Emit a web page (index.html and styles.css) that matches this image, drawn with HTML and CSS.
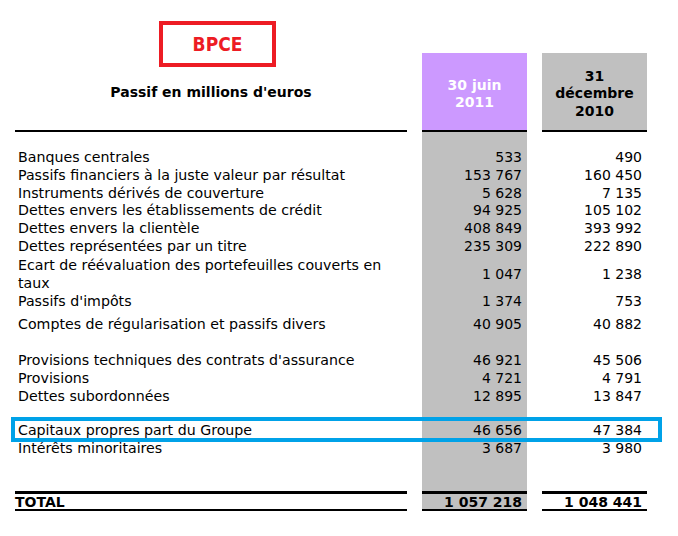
FILE: index.html
```html
<!DOCTYPE html>
<html lang="fr">
<head>
<meta charset="utf-8">
<title>BPCE – Passif</title>
<link rel="stylesheet" href="styles.css">
</head>
<body>
<table class="sheet">
  <colgroup>
    <col class="col-label">
    <col class="col-num">
    <col class="col-num">
  </colgroup>
  <thead>
    <tr class="head">
      <td class="head-label">
        <div class="head-box">
          <div class="brand">BPCE</div>
          <div class="title">Passif en millions d'euros</div>
        </div>
      </td>
      <td><div class="date date-cur">30 juin<br>2011</div></td>
      <td><div class="date date-prev">31<br>décembre<br>2010</div></td>
    </tr>
  </thead>
  <tbody>
    <tr class="first"><td class="lbl">Banques centrales</td><td class="v1">533</td><td class="v2">490</td></tr>
    <tr><td class="lbl">Passifs financiers à la juste valeur par résultat</td><td class="v1">153 767</td><td class="v2">160 450</td></tr>
    <tr><td class="lbl">Instruments dérivés de couverture</td><td class="v1">5 628</td><td class="v2">7 135</td></tr>
    <tr><td class="lbl">Dettes envers les établissements de crédit</td><td class="v1">94 925</td><td class="v2">105 102</td></tr>
    <tr><td class="lbl">Dettes envers la clientèle</td><td class="v1">408 849</td><td class="v2">393 992</td></tr>
    <tr><td class="lbl">Dettes représentées par un titre</td><td class="v1">235 309</td><td class="v2">222 890</td></tr>
    <tr class="two"><td class="lbl">Ecart de réévaluation des portefeuilles couverts en taux</td><td class="v1">1 047</td><td class="v2">1 238</td></tr>
    <tr class="pad-xs"><td class="lbl">Passifs d'impôts</td><td class="v1">1 374</td><td class="v2">753</td></tr>
    <tr class="pad-s"><td class="lbl">Comptes de régularisation et passifs divers</td><td class="v1">40 905</td><td class="v2">40 882</td></tr>
    <tr class="pad-l"><td class="lbl">Provisions techniques des contrats d'assurance</td><td class="v1">46 921</td><td class="v2">45 506</td></tr>
    <tr><td class="lbl">Provisions</td><td class="v1">4 721</td><td class="v2">4 791</td></tr>
    <tr><td class="lbl">Dettes subordonnées</td><td class="v1">12 895</td><td class="v2">13 847</td></tr>
    <tr class="pad-m"><td class="lbl hl-cell">Capitaux propres part du Groupe<span class="highlight"></span></td><td class="v1">46 656</td><td class="v2">47 384</td></tr>
    <tr class="last"><td class="lbl">Intérêts minoritaires</td><td class="v1">3 687</td><td class="v2">3 980</td></tr>
    <tr class="total"><td class="lbl">TOTAL</td><td class="v1">1 057 218</td><td class="v2">1 048 441</td></tr>
  </tbody>
</table>
</body>
</html>
```

FILE: styles.css
```css
html, body {
  margin: 0;
  background: #ffffff;
}

body {
  font-family: "DejaVu Sans", Verdana, sans-serif;
  font-size: 14px;
  color: #000000;
}

.sheet {
  border-collapse: separate;
  border-spacing: 15px 0;
  table-layout: fixed;
  width: 662px;
  margin-top: 21px;
}

.col-label { width: 392px; }
.col-num { width: 105px; }

.sheet td {
  padding: 0;
  line-height: 17.7px;
  vertical-align: top;
}

/* header */
.head td {
  vertical-align: bottom;
  border-bottom: 2px solid #000000;
}

.head td.head-label {
  vertical-align: top;
}

.head-box {
  height: 109px;
  display: flex;
  flex-direction: column;
}

.brand {
  margin-left: 144px;
  width: 117px;
  height: 46px;
  box-sizing: border-box;
  border: 4px solid #ed1c24;
  display: flex;
  align-items: center;
  justify-content: center;
  color: #ed1c24;
  font-family: "DejaVu Sans Condensed", "Liberation Sans Narrow", "DejaVu Sans", sans-serif;
  font-stretch: condensed;
  font-weight: bold;
  font-size: 19px;
  padding-top: 2px;
}

.title {
  margin-top: 17.3px;
  text-align: center;
  font-weight: bold;
  line-height: 17.7px;
}

.date {
  height: 77px;
  box-sizing: border-box;
  text-align: center;
  font-weight: bold;
  line-height: 17.3px;
}

.date-cur {
  background: #cc99ff;
  color: #ffffff;
  padding-top: 23.5px;
}

.date-prev {
  background: #c0c0c0;
  color: #000000;
  padding-top: 15.2px;
}

/* body rows */
.sheet td.lbl {
  padding-left: 3px;
  padding-right: 22px;
  font-size: 14.2px;
}

.sheet td.v1 {
  background: #c0c0c0;
  text-align: right;
  padding-right: 5px;
}

.sheet td.v2 {
  text-align: right;
  padding-right: 5px;
}

.sheet tr.first > td { padding-top: 17.3px; }
.sheet tr.pad-xs > td { padding-top: 0.6px; }
.sheet tr.pad-s > td { padding-top: 5.3px; }
.sheet tr.pad-l > td { padding-top: 18.3px; }
.sheet tr.pad-m > td { padding-top: 16.9px; }
.sheet tr.last > td { padding-bottom: 33.3px; }

.sheet tr.two > td { line-height: 18.6px; }
.sheet tr.two > td.v1,
.sheet tr.two > td.v2 { vertical-align: middle; }

/* highlight frame around "Capitaux propres" */
.hl-cell { position: relative; }

.highlight {
  position: absolute;
  left: -4px;
  top: 11.6px;
  width: 651px;
  height: 25px;
  box-sizing: border-box;
  border: 4px solid #00a2e8;
  pointer-events: none;
}

/* total row */
.sheet tr.total > td {
  border-top: 3px solid #000000;
  border-bottom: 2px solid #000000;
  font-weight: bold;
  font-size: 14px;
  line-height: 14px;
  padding-top: 1px;
}

.sheet tr.total > td.lbl { padding-left: 0; }
```
